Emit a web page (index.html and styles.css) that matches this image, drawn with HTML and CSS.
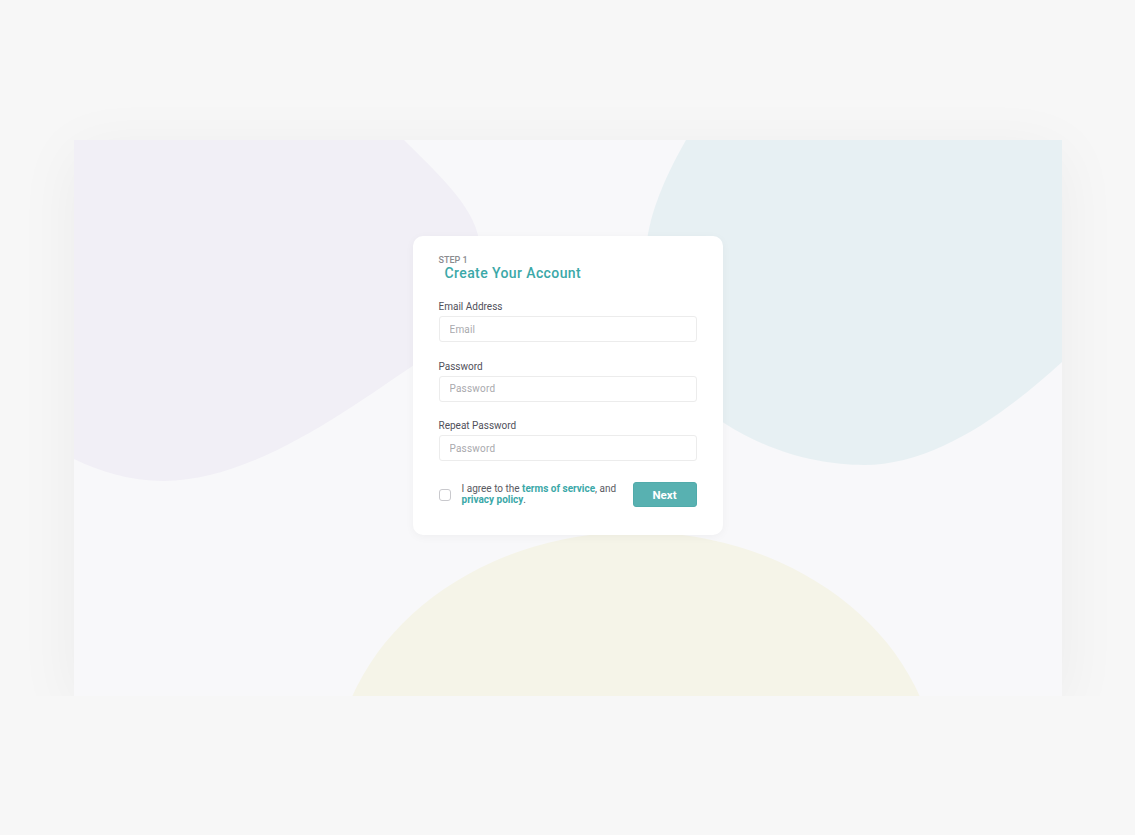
FILE: index.html
```html
<!DOCTYPE html>
<html lang="en">
<head>
    <meta charset="UTF-8">
    <meta name="viewport" content="width=device-width, initial-scale=1.0">
    <title>Create Your Account</title>
    <link rel="stylesheet" href="styles.css">
</head>
<body>

    <div class="stage">
        <!-- background blobs -->
        <svg class="blobs" viewBox="0 0 988 556" preserveAspectRatio="none">
            <path fill="#f1eff6" d="M0 0 L330 0 C362 32 400 66 405 100 C410 150 385 195 340 225 C280 265 180 341 90 341 C55 341 25 331 0 319 Z"/>
            <path fill="#e7f0f3" d="M612 0 C595 30 578 65 573 100 C565 170 600 250 650 283 C700 315 750 325 790 325 C860 325 930 275 988 222 L988 0 Z"/>
            <ellipse fill="#f5f4e8" cx="562" cy="642" rx="302" ry="250"/>
        </svg>

        <form class="card" onsubmit="return false">
            <div class="step">Step 1</div>
            <h1>Create Your Account</h1>

            <div class="field">
                <label for="email">Email Address</label>
                <input type="text" id="email" placeholder="Email">
            </div>

            <div class="field">
                <label for="password">Password</label>
                <input type="password" id="password" placeholder="Password">
            </div>

            <div class="field last">
                <label for="repeat">Repeat Password</label>
                <input type="password" id="repeat" placeholder="Password">
            </div>

            <div class="footer">
                <input type="checkbox" id="agree" class="check">
                <label for="agree" class="terms">I agree to the <a href="#">terms of service</a>, and <a href="#">privacy policy</a>.</label>
                <button type="submit">Next</button>
            </div>
        </form>
    </div>

</body>
</html>
```

FILE: styles.css
```css
body {
    margin: 0;
    padding-top: 140px;
    background-color: #f7f7f7;
    font-family: Roboto, "Liberation Sans", Arial, sans-serif;
}

.stage {
    position: relative;
    width: 988px;
    height: 556px;
    margin: 0 auto;
    background-color: #f8f8fa;
    overflow: hidden;
    box-shadow: 0 12px 60px rgba(0, 0, 0, 0.05);
    display: flex;
    justify-content: center;
    align-items: flex-start;
    padding-top: 96px;
    box-sizing: border-box;
}

.blobs {
    position: absolute;
    left: 0;
    top: 0;
    width: 100%;
    height: 100%;
}

.card {
    position: relative;
    width: 310px;
    box-sizing: border-box;
    padding: 19px 26px 28px;
    background-color: #fff;
    border-radius: 10px;
    box-shadow: 0 2px 10px rgba(0, 0, 0, 0.04);
}

.step {
    font-size: 9px;
    line-height: 10px;
    font-weight: 500;
    text-transform: uppercase;
    color: #8b8b8f;
}

h1 {
    margin: 0 0 20px 6px;
    font-size: 14px;
    line-height: 16px;
    font-weight: 500;
    letter-spacing: 0.4px;
    color: #3ba8a8;
}

.field {
    margin-bottom: 18.5px;
}

.field.last {
    margin-bottom: 21px;
}

.field label {
    display: block;
    margin-bottom: 3px;
    font-size: 10px;
    line-height: 12px;
    color: #50505a;
}

.field input {
    display: block;
    width: 100%;
    height: 26px;
    box-sizing: border-box;
    padding: 0 10px;
    border: 1px solid #ececec;
    border-radius: 3px;
    font-family: inherit;
    font-size: 10px;
    color: #444;
    outline: none;
}

.field input::placeholder {
    color: #a9a9ad;
    letter-spacing: 0.2px;
}

.footer {
    display: flex;
    align-items: center;
    height: 25px;
}

.check {
    appearance: none;
    -webkit-appearance: none;
    flex: none;
    width: 12px;
    height: 12px;
    margin: 0;
    border: 1px solid #c9c9cd;
    border-radius: 3px;
    background-color: #fff;
    box-sizing: border-box;
}

.terms {
    flex: 1;
    margin: 0 10px 2px 11px;
    font-size: 10px;
    line-height: 11px;
    color: #5a5a62;
}

.terms a {
    color: #3ba8a8;
    font-weight: 700;
    text-decoration: none;
}

button {
    flex: none;
    width: 64px;
    height: 25px;
    padding: 0;
    border: 1px solid #51abab;
    border-radius: 3px;
    background-color: #58b1b1;
    color: #fff;
    font-family: inherit;
    font-size: 11.5px;
    font-weight: 700;
    cursor: pointer;
}
```
